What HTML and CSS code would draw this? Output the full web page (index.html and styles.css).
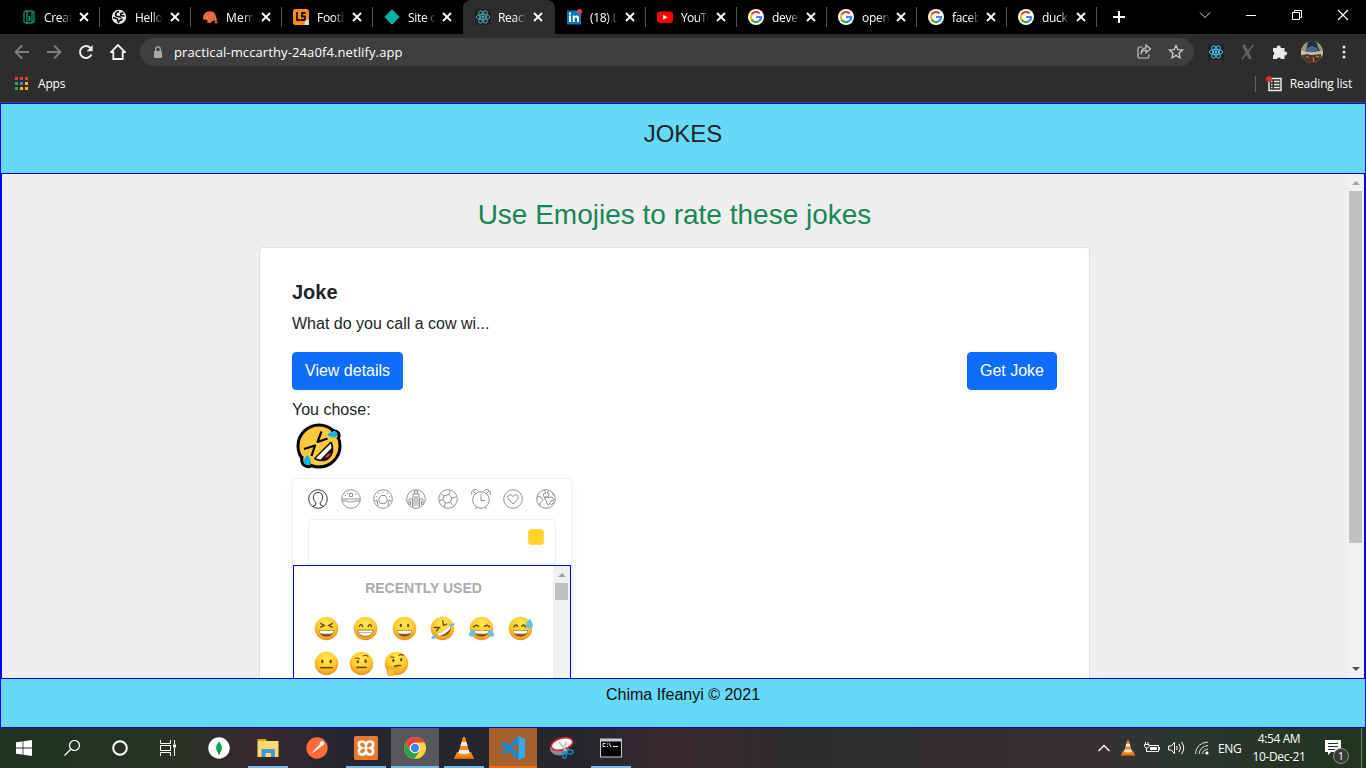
FILE: index.html
```html
<!DOCTYPE html>
<html lang="en">
<head>
<meta charset="utf-8">
<title>Jokes</title>
<link rel="stylesheet" href="styles.css">
</head>
<body>
<svg class="defs" width="0" height="0">
  <defs>
    <radialGradient id="face" cx=".5" cy=".3" r=".7"><stop offset="0" stop-color="#ffec55"/><stop offset=".6" stop-color="#fdc92d"/><stop offset="1" stop-color="#ee8d1c"/></radialGradient>
    <symbol id="close" viewBox="0 0 10 10"><path d="M1 1l8 8M9 1L1 9" stroke="#fff" stroke-width="1.8" fill="none"/></symbol>
    <symbol id="google" viewBox="0 0 16 16"><circle cx="8" cy="8" r="8" fill="#fff"/><g fill="none" stroke-width="2.2"><path d="M11.6 4.4A5.1 5.1 0 0 0 3.5 5.6" stroke="#ea4335"/><path d="M3.5 5.6a5.1 5.1 0 0 0 0 4.8" stroke="#fbbc05"/><path d="M3.5 10.4a5.1 5.1 0 0 0 7.8 1.5" stroke="#34a853"/><path d="M11.3 11.9A5.1 5.1 0 0 0 13.1 8H8" stroke="#4285f4"/></g></symbol>
    <symbol id="react" viewBox="0 0 16 16"><rect width="16" height="16" rx="1" fill="#202225"/><g fill="none" stroke="currentColor" stroke-width="1"><ellipse cx="8" cy="8" rx="6.8" ry="2.6"/><ellipse cx="8" cy="8" rx="6.8" ry="2.6" transform="rotate(60 8 8)"/><ellipse cx="8" cy="8" rx="6.8" ry="2.6" transform="rotate(120 8 8)"/></g><circle cx="8" cy="8" r="1.4" fill="currentColor"/></symbol>
    <symbol id="vlc" viewBox="0 0 20 22"><path d="M3 15h14l3 6.5H0z" fill="#f08a18"/><path d="M0 20h20v2H0z" fill="#d96a0a"/><path d="M9 0h2l5 17q-6 3-12 0z" fill="#f58a1c"/><path d="M7.6 5h4.8l1.2 4H6.4zM5.2 13h9.6l.9 3q-5.700 2.500-11.400 0z" fill="#e9e9e9"/></symbol>
    <symbol id="ball" viewBox="0 0 24 24"><circle cx="12" cy="12" r="11.300" fill="url(#face)"/></symbol>
    <symbol id="grin-mouth" viewBox="0 0 24 24"><path d="M4.800 13.500q7.200 1.200 14.400 0-.6 6.300-7.200 6.300t-7.200-6.300z" fill="#8a5518"/><path d="M5.300 14q6.700 1 13.400 0-.1 1.600-.8 2.500-5.900 1-11.800 0-.7-1-.8-2.500z" fill="#fff"/></symbol>
    <symbol id="e-squint" viewBox="0 0 24 24"><use href="#ball"/><use href="#grin-mouth"/><path d="M6 7l4 2-4 2M18 7l-4 2 4 2" fill="none" stroke="#70430f" stroke-width="1.300"/></symbol>
    <symbol id="e-beam" viewBox="0 0 24 24"><use href="#ball"/><path d="M4.500 13.500h15q-.6 6-7.500 6t-7.500-6z" fill="#fff" stroke="#9a6514" stroke-width=".8"/><path d="M5 16h14" stroke="#b78c50" stroke-width=".7"/><path d="M6 10.500q1.800-5 3.600 0M14.400 10.500q1.800-5 3.600 0" fill="none" stroke="#70430f" stroke-width="1.300"/></symbol>
    <symbol id="e-grin" viewBox="0 0 24 24"><use href="#ball"/><use href="#grin-mouth"/><ellipse cx="8.500" cy="9" rx="1.100" ry="1.600" fill="#70430f"/><ellipse cx="15.500" cy="9" rx="1.100" ry="1.600" fill="#70430f"/></symbol>
    <symbol id="e-joy" viewBox="0 0 24 24"><use href="#ball"/><use href="#grin-mouth"/><path d="M4 11q3-4 5.500-.5M14.500 10.500q2.500-3.500 5.500.5" fill="none" stroke="#70430f" stroke-width="1.300"/><path d="M5.500 13q1.500 6-3.500 7-3-1-1.500-4 1-2 5-3zM18.500 13q-1.500 6 3.500 7 3-1 1.500-4-1-2-5-3z" fill="#62c0ee"/></symbol>
    <symbol id="e-rofl" viewBox="0 0 24 24"><use href="#ball"/><path d="M7 17.500q7-2 12.500-8.500 1.500 5-2 8.500-5 4-10.500 0z" fill="#8a5518"/><path d="M7 17q7-2 12-8 1 2 .3 3.500-4 5-9.800 6.500-1.700-.6-2.500-2z" fill="#fff"/><path d="M3.500 11l5.500 0-3 3.500M12 4l1 5 3.500-1.500" fill="none" stroke="#70430f" stroke-width="1.300"/><path d="M7 17.500q-1 5-5 4.500-2.500-2.500 5-4.500zM18 9.500q2-3 6-2.500-.5 3-6 2.500z" fill="#62c0ee"/></symbol>
    <symbol id="e-sweat" viewBox="0 0 24 24"><use href="#ball"/><use href="#grin-mouth"/><path d="M5.500 11q2-4.500 4-.5M13 10.500q2-4 4 .5" fill="none" stroke="#70430f" stroke-width="1.300"/><path d="M20.500 2.500q-3.500 5-3.300 6.500.5 3 3.500 3 3.300-.5 3.300-3.500-.5-2-3.500-6z" fill="#62c0ee"/></symbol>
    <symbol id="e-neutral" viewBox="0 0 24 24"><use href="#ball"/><path d="M6 16h12" stroke="#70430f" stroke-width="1.500"/><ellipse cx="8" cy="10" rx="1.100" ry="1.800" fill="#70430f"/><ellipse cx="16" cy="10" rx="1.100" ry="1.800" fill="#70430f"/></symbol>
    <symbol id="e-brow" viewBox="0 0 24 24"><use href="#ball"/><path d="M7 15.800h10" stroke="#70430f" stroke-width="1.500"/><path d="M5.500 7q3-.8 5 .8M13.500 5q2.500-2 5 .3" fill="none" stroke="#70430f"/><ellipse cx="8.500" cy="10.200" rx="1.100" ry="1.600" fill="#70430f"/><ellipse cx="16" cy="9.800" rx="1.100" ry="1.800" fill="#70430f"/></symbol>
    <symbol id="e-think" viewBox="0 0 24 24"><use href="#ball"/><path d="M6 6q2.500-.8 4 .5M14 4.500q2.500-2 5 0" fill="none" stroke="#70430f"/><path d="M9.500 15q3-1.500 7-1" fill="none" stroke="#70430f" stroke-width="1.300"/><ellipse cx="9" cy="9" rx="1.100" ry="1.600" fill="#70430f"/><ellipse cx="16.500" cy="8.300" rx="1.100" ry="1.600" fill="#70430f"/><path d="M4 15q2-1 2.500 2l7-1.500q1.500.8 0 1.800L10.500 19q1 4-3 5-4.500.3-4.500-4z" fill="#fbc02f" stroke="#d98a14" stroke-width=".6"/></symbol>
  </defs>
</svg>

<div class="browser">
  <div class="tabstrip">
    <div class="tab"><svg class="fav" viewBox="0 0 16 16"><path d="M7 1.500L4 3v10l3 1.500zM9 2h3v12H9l-2-1V3.500L9 2zM12 3h2v10h-2" fill="none" stroke="#12915d" stroke-width="1.300"/><path d="M8.500 7h2v5h-2z" fill="#12915d"/></svg><span class="name">Creat</span><svg class="x"><use href="#close"/></svg></div>
    <div class="tab"><svg class="fav" viewBox="0 0 16 16"><circle cx="8" cy="8" r="7.200" fill="#e8eaed"/><path d="M8 2.500Q5 3 4.500 5.500 4.500 7.500 7 7.500t3 1.500M12.500 4Q9.500 4 9.500 5.500T13.500 7M2 8.500l3 1q2 0 1.500 2L8 14M8 12l3.500-2" fill="none" stroke="#000" stroke-width="1.500"/></svg><span class="name">Hello</span><svg class="x"><use href="#close"/></svg></div>
    <div class="tab"><svg class="fav" viewBox="0 0 16 16"><path d="M1 8.500Q1.500 3 7 2.200q6-.2 7 5.300 1 2 .8 4.500l-1.500 1-1-2q-2 2.500-5 2L4 10.500 1.500 11z" fill="#ea6a47"/><path d="M5 12.500l4 1M12.500 13.500h3M6 10l4 1" stroke="#ea6a47" stroke-width="1.400"/></svg><span class="name wide">Mem</span><svg class="x"><use href="#close"/></svg></div>
    <div class="tab"><svg class="fav" viewBox="0 0 16 16"><rect width="16" height="16" rx="2.500" fill="#ff8a0b"/><path d="M4 3v8h3.500M12.500 4H9v3.500h3V11H8" fill="none" stroke="#111" stroke-width="1.800"/><path d="M12 11.500l4-.8V16h-4.500z" fill="#ddd"/></svg><span class="name">Footb</span><svg class="x"><use href="#close"/></svg></div>
    <div class="tab narrow nosep"><svg class="fav" viewBox="0 0 16 16"><path d="M8 .3L15.700 8 8 15.700.3 8z" fill="#05b1a0"/></svg><span class="name">Site o</span><svg class="x"><use href="#close"/></svg></div>
    <div class="tab active"><svg class="fav dimreact"><use href="#react"/></svg><span class="name">React</span><svg class="x"><use href="#close"/></svg></div>
    <div class="tab"><svg class="fav" viewBox="0 0 16 16"><path d="M1 1.500h14v14H1z" fill="#0b78b8"/><path d="M3 6.500h2v6.500H3zM3 3.500h2v2H3zM6.700 6.500h2v1q2.500-2 4.300.5v5h-2V9q-1.200-1.400-2.300 0v4h-2z" fill="#fff"/><circle cx="13.500" cy="2.500" r="2.500" fill="#f0413e"/></svg><span class="name">(18) L</span><svg class="x"><use href="#close"/></svg></div>
    <div class="tab"><svg class="fav" viewBox="0 0 16 16"><rect y="2.500" width="16" height="11.500" rx="3" fill="#f00"/><path d="M6.200 5.800v4.900l4.200-2.450z" fill="#fff"/></svg><span class="name tight">YouTu</span><svg class="x"><use href="#close"/></svg></div>
    <div class="tab narrow"><svg class="fav"><use href="#google"/></svg><span class="name">devel</span><svg class="x"><use href="#close"/></svg></div>
    <div class="tab narrow"><svg class="fav"><use href="#google"/></svg><span class="name">open</span><svg class="x"><use href="#close"/></svg></div>
    <div class="tab narrow"><svg class="fav"><use href="#google"/></svg><span class="name">faceb</span><svg class="x"><use href="#close"/></svg></div>
    <div class="tab narrow"><svg class="fav"><use href="#google"/></svg><span class="name">duck</span><svg class="x"><use href="#close"/></svg></div>
    <svg class="plus" viewBox="0 0 12 12"><path d="M6 0v12M0 6h12" stroke="#fff" stroke-width="2"/></svg>
    <div class="window-buttons">
      <svg viewBox="0 0 12 12"><path d="M1 3.500l5 5 5-5" stroke="#ddd" fill="none"/></svg>
      <svg viewBox="0 0 12 12"><path d="M1 6.500h10" stroke="#fff"/></svg>
      <svg viewBox="0 0 12 12"><path d="M1.500 3.500h7v7h-7zM3.500 3.500v-2h7v7h-2" stroke="#fff" fill="none"/></svg>
      <svg viewBox="0 0 12 12"><path d="M1 1l10 10M11 1L1 11" stroke="#fff" stroke-width="1.200"/></svg>
    </div>
  </div>
  <div class="toolbar">
    <div class="nav">
      <svg viewBox="0 0 16 16"><path d="M15 8H2M8 1.500L1.500 8 8 14.500" stroke="#7d7f81" stroke-width="1.800" fill="none"/></svg>
      <svg viewBox="0 0 16 16"><path d="M1 8h13M8 1.500L14.500 8 8 14.500" stroke="#7d7f81" stroke-width="1.800" fill="none"/></svg>
      <svg viewBox="0 0 16 16"><path d="M13.500 10.500A6 6 0 1 1 12.500 4" stroke="#e8eaed" stroke-width="2" fill="none"/><path d="M14.700 1v6.300H8.500z" fill="#e8eaed"/></svg>
      <svg viewBox="0 0 16 16"><path d="M8 1L1 8.200h2.300V15h9.400V8.200H15z" stroke="#f1f3f4" stroke-width="1.800" fill="none"/></svg>
    </div>
    <div class="omnibox">
      <svg class="lock" viewBox="0 0 10 13"><rect x="1" y="5" width="8" height="7" rx="1" fill="#a6a9ad"/><path d="M2.700 5V3.200a2.300 2.300 0 0 1 4.600 0V5" stroke="#a6a9ad" stroke-width="1.300" fill="none"/></svg>
      <span class="url">practical-mccarthy-24a0f4.netlify.app</span>
      <svg class="share" viewBox="0 0 16 16"><path d="M6.500 3H3.500Q2 3 2 4.500v8Q2 14 3.500 14h8q1.500 0 1.500-1.500v-2M5 10.500q0-4 5-4.300V8.800l4.500-4L10 1v2.800Q5 4 5 10.500z" stroke="#c4c7c9" stroke-width="1.200" fill="none"/></svg>
      <svg class="star" viewBox="0 0 16 16"><path d="M8 1.500l1.900 4.200 4.600.4L11 9.200l1 4.600-4-2.400-4 2.400 1-4.600L1.500 6.100l4.600-.4z" stroke="#c4c7c9" stroke-width="1.400" fill="none"/></svg>
    </div>
    <div class="extensions">
      <svg class="ext blue"><use href="#react"/></svg>
      <svg class="ext" viewBox="0 0 16 16"><path d="M3.500 1l7 14" stroke="#626365" stroke-width="3" fill="none"/><path d="M13.500 1L2 15" stroke="#626365" stroke-width="1.800" fill="none"/></svg>
      <svg class="ext" viewBox="0 0 16 16"><path d="M1 4h3.800a2 2 0 1 1 3.800 0H12.500v3.500a2 2 0 1 1 0 3.800V15H8.900a2 2 0 0 0-3.800 0H1v-3.600a2 2 0 0 0 0-3.800z" fill="#e8eaed"/></svg>
      <svg class="avatar" viewBox="0 0 22 22"><defs><clipPath id="av"><circle cx="11" cy="11" r="11"/></clipPath></defs><g clip-path="url(#av)"><path d="M0 0h22v22H0z" fill="#a09972"/><path d="M7 0h8l2 6 2 4-6 1-8-1 1-5z" fill="#202e45"/><path d="M6 7l5-2 5 2 2 3-7 1.500-7-1.500z" fill="#49648f"/><path d="M0 9l5 2 5 .5L22 10v4H0z" fill="#c9c2ae"/><path d="M1 14l5-1 4 1 10-1v9H3z" fill="#4d3528"/><path d="M5 15l3 2M12 16l1 5M15 15l3 1" stroke="#c79a6b"/></g></svg>
      <svg class="dots" viewBox="0 0 4 14"><circle cx="2" cy="2" r="1.500" fill="#e8eaed"/><circle cx="2" cy="7" r="1.500" fill="#e8eaed"/><circle cx="2" cy="12" r="1.500" fill="#e8eaed"/></svg>
    </div>
  </div>
  <div class="bookmarks">
    <svg class="apps" viewBox="0 0 13 13"><path d="M0 0h3v3H0zM5 0h3v3H5zM10 0h3v3h-3z" fill="#ee3a37"/><path d="M0 5h3v3H0zM0 10h3v3H0z" fill="#35a456"/><path d="M5 5h3v3H5z" fill="#2b8bf2"/><path d="M10 5h3v3h-3zM5 10h3v3H5zM10 10h3v3h-3z" fill="#fbb51a"/></svg>
    <span>Apps</span>
    <i class="divider"></i>
    <svg class="reading" viewBox="0 0 17 16"><path d="M3 2.500h12v12H3z" fill="none" stroke="#e8eaed" stroke-width="1.500"/><path d="M5 5.500h1.500M8 5.500h5.500M5 8.500h1.500M8 8.500h5.500M5 11.500h1.500M8 11.500h5.500" stroke="#e8eaed" stroke-width="1.300"/><circle cx="3" cy="3" r="3" fill="#d93025"/></svg>
    <span>Reading list</span>
  </div>
</div>

<div class="app">
  <header class="app-header">JOKES</header>
  <main class="main">
    <div class="content">
      <h1 class="heading">Use Emojies to rate these jokes</h1>
      <section class="card">
        <h2 class="card-title">Joke</h2>
        <p class="joke">What do you call a cow wi...</p>
        <div class="actions"><button class="btn">View details</button><button class="btn">Get Joke</button></div>
        <p class="chose">You chose:</p>
        <svg class="chosen" viewBox="0 0 46 46"><circle cx="23" cy="23" r="21" fill="#ffc83d" stroke="#000" stroke-width="3"/><path d="M35 8q5-1 7.500 2 1.500 4-1 6.500M6 33q-1 7 2 9 4 3 7 1" stroke="#000" stroke-width="3" fill="#ffc83d"/><path d="M19.500 35.500L35 20q3 9-2 14t-13.500 1.500z" fill="#111" stroke="#111" stroke-width="2.600" stroke-linejoin="round"/><path d="M20 35L34.800 20.500l.7 4.500L24.500 36.500q-3-.3-4.500-1.500z" fill="#fff"/><path d="M29 35q1-4 6-5-1 4-6 5z" fill="#f03a17"/><path d="M25.500 8.500L21.500 19l10-3.500M8 26l11-3.500L15.500 33" fill="none" stroke="#000" stroke-width="2.200" stroke-linejoin="round"/><path d="M31 12q4-4 8-4 4 2 1.500 5.500-4 2-9.500-1.500zM11.500 32q-5 5-3.500 8.500 3.500 3 6.500 0 1.500-3.500-3-8.500z" fill="#00b9f2"/></svg>
        <div class="picker">
          <div class="categories">
            <svg class="on" viewBox="0 0 20 20"><circle cx="10" cy="10" r="9.300"/><path d="M4.500 17.500q4-1 3.500-3.500Q5.500 12 5.300 8q.5-4.500 4.700-4.500T14.700 8q-.2 4-2.700 6-.5 2.500 3.500 3.500"/></svg>
            <svg viewBox="0 0 20 20"><circle cx="10" cy="10" r="9.300"/><path d="M1 10h18M1 12h5l2 1h4l2-1h5M8.500 7.500v-3h3v3zM4 6.500h1M6 4.500h1M14 5h1.500"/></svg>
            <svg viewBox="0 0 20 20"><circle cx="10" cy="10" r="9.300"/><path d="M7 14q-1.500-1-1-5l2-2.500h4L14 9q.5 4-1 5-3 1.500-6 0zM2 12l2-1 1 6M18 12l-2-1-1 6M5 4l1 1M10 2.500v1M15 4l-1 1M3 7.500h1M16 7.500h1"/></svg>
            <svg viewBox="0 0 20 20"><circle cx="10" cy="10" r="9.300"/><path d="M7 18V5h6v13M8.500 5V2h3v3M3 16v-6h3.500v7M17 16v-6h-3.500v7M9 7v10M11 7v10M4.500 12v4M15.500 12v4"/></svg>
            <svg viewBox="0 0 20 20"><circle cx="10" cy="10" r="9.300"/><path d="M6 7l5-1.500 3 3.500-1.500 4.500-5 .5L5 10.500zM11 5.500l1-3.500M6 7L3.500 5M5 10.500L1 12M14 9l4-1M7.500 14L6 18M12.500 13.500l3 3"/></svg>
            <svg viewBox="0 0 20 20"><circle cx="10" cy="11" r="8.300"/><path d="M10 5.500v6h4M6 18l-2 2M14 18l2 2M1 6Q-.5 2 3 .8 6-.5 7 2M19 6q1.500-4-2-5.200-3-1.300-4 1.200M2 2l3 3M18 2l-3 3"/></svg>
            <svg viewBox="0 0 20 20"><circle cx="10" cy="10" r="9.300"/><path d="M10 15L5.200 10Q4 7.500 5.500 6.300 8 4.500 10 7.500q2-3 4.500-1.200Q16 7.500 14.800 10z"/></svg>
            <svg viewBox="0 0 20 20"><circle cx="10" cy="10" r="9.300"/><path d="M1 7l4 1 2 3-3 3v3M8 1l2 3-3 1 1 3h4l1-3-2-1 2-2M8 9l8-1 2 3-3 1-2 4-2-1-1-4zM16 4l2 3M15 16l3-3"/></svg>
          </div>
          <div class="search"><i class="tone"></i></div>
          <div class="emoji-scroll">
            <div class="emoji-list">
              <h3 class="group">Recently Used</h3>
              <div class="emoji-row"><svg><use href="#e-squint"/></svg><svg><use href="#e-beam"/></svg><svg><use href="#e-grin"/></svg><svg><use href="#e-rofl"/></svg><svg><use href="#e-joy"/></svg><svg><use href="#e-sweat"/></svg></div>
              <div class="emoji-row last"><svg><use href="#e-neutral"/></svg><svg><use href="#e-brow"/></svg><svg><use href="#e-think"/></svg></div>
            </div>
            <div class="scrollbar"><i class="arrow up"></i><i class="thumb small"></i></div>
          </div>
        </div>
      </section>
    </div>
    <div class="scrollbar"><i class="arrow up"></i><i class="thumb"></i><i class="arrow down"></i></div>
  </main>
  <footer class="app-footer">Chima Ifeanyi © 2021</footer>
</div>

<div class="taskbar">
  <div class="sys"><svg viewBox="0 0 16 16"><path d="M0 2.300L6.600 1.400v6.200H0zM7.400 1.300L16 0v7.600H7.400zM0 8.400h6.600v6.200L0 13.700zM7.400 8.400H16V16l-8.600-1.300z" fill="#fff"/></svg></div>
  <div class="sys"><svg viewBox="0 0 16 16"><circle cx="10.500" cy="5.500" r="5" stroke="#fff" stroke-width="1.200" fill="none"/><path d="M7 9L.5 15.500" stroke="#fff" stroke-width="1.200"/></svg></div>
  <div class="sys"><svg viewBox="0 0 16 16"><circle cx="8" cy="8" r="6.800" stroke="#fff" stroke-width="2" fill="none"/></svg></div>
  <div class="sys"><svg viewBox="0 0 16 16"><path d="M.5 0v3.500h10V0M.5 16v-3.500h10V16M.5 5.500h10v5H.5zM14.500 0v4M14.500 8v8" stroke="#fff" fill="none"/><path d="M13 4.500h3v3h-3z" fill="#fff"/></svg></div>
  <div class="task first"><svg viewBox="0 0 24 24"><circle cx="12" cy="12" r="10.700" fill="#fff"/><path d="M12 5.500q6 6.500 0 12.500-6-6 0-12.500z" fill="#13a455"/><path d="M12 14v5" stroke="#087c3b"/></svg></div>
  <div class="task open"><svg viewBox="0 0 24 24"><path d="M1.500 3H10l1 2.500H1.500z" fill="#e2a31b"/><path d="M1.500 5h21v16h-21z" fill="#ffd970"/><path d="M5.500 13h13.300v8H15v-4H9.500v4h-4z" fill="#3a97dc"/></svg></div>
  <div class="task"><svg viewBox="0 0 24 24"><circle cx="12" cy="12" r="10.700" fill="#ff6c37"/><path d="M6 17.500l8.500-9 2 2-7 5z" fill="#fff"/><circle cx="17" cy="7.500" r="2.300" fill="#fff"/></svg></div>
  <div class="task open"><svg viewBox="0 0 24 24"><rect x="0" y="0" width="24" height="24" rx="1.500" fill="#e8792a"/><path d="M8 5.500Q4.800 5.500 4.800 8.500q0 2.500 2.500 3.500-2.500 1-2.500 3.500 0 3 3.200 3 3 0 4-3 1 3 4 3 3.200 0 3.200-3 0-2.500-2.500-3.500 2.500-1 2.500-3.500 0-3-3.200-3-3 0-4 3-1-3-4-3zM10.500 12h3" fill="none" stroke="#fff" stroke-width="2.700"/></svg></div>
  <div class="task current"><svg viewBox="0 0 24 24"><circle cx="12" cy="12" r="11" fill="#ffd33e"/><path d="M2.500 6.500A11 11 0 0 1 21.600 6.500H12L7.500 14.700z" fill="#e64436"/><path d="M2.400 6.600L7.300 15H16.700L11.300 23A11 11 0 0 1 2.400 6.600z" fill="#2da14c"/><circle cx="12" cy="12" r="5.300" fill="#fff"/><circle cx="12" cy="12" r="4.200" fill="#4285f4"/></svg></div>
  <div class="task open"><svg viewBox="-2 -1 24 24"><use href="#vlc" width="20" height="22"/></svg></div>
  <div class="task alert"><svg viewBox="0 0 24 24"><path d="M17.500 6.500L3 18.500 0 16 17.500 0z" fill="#2586ca"/><path d="M17.500 17.500L3 5.500 0 8l17.500 16z" fill="#168bd2"/><path d="M17.500 0L24 3v18l-6.500 3z" fill="#31a9f2"/></svg></div>
  <div class="task"><svg viewBox="0 0 24 24"><ellipse cx="9.500" cy="13" rx="9.500" ry="6.500" fill="#8a8a8e"/><ellipse cx="12" cy="8" rx="11" ry="5.800" transform="rotate(-15 12 8)" fill="#f6f6f6" stroke="#d8212f" stroke-width="1.600"/><path d="M9 6l8 10M16 6l-2 10" stroke="#b8bcc5" stroke-width="1.500"/><ellipse cx="14.500" cy="19" rx="1.800" ry="3.200" fill="none" stroke="#1784c8" stroke-width="1.500"/><ellipse cx="20" cy="16" rx="3" ry="2" fill="none" stroke="#1784c8" stroke-width="1.500"/></svg></div>
  <div class="task open"><svg viewBox="0 0 24 24"><path d="M1 2.500h22v19H1z" fill="#c6c9cc"/><path d="M2 5.500h20v15H2z" fill="#050505"/><path d="M6.500 7.500H4v3h2.500M8.500 7.500v1M8.500 10v1M10 7l2 4M14 10.500h5" stroke="#e8e8e8" fill="none"/></svg></div>
  <div class="tray">
    <svg class="t-up" viewBox="0 0 12 8"><path d="M.5 7L6 1.500 11.500 7" stroke="#fff" stroke-width="1.300" fill="none"/></svg>
    <svg class="t-vlc"><use href="#vlc"/></svg>
    <svg class="t-bat" viewBox="0 0 16 12"><path d="M5 3.500h9.500v6H5.500M15.500 5v3M1.500 0v2M4 0v2M.5 2.500h4.500v2L3.500 6H2L.5 4.500zM2.500 6v3.500h3" stroke="#fff" fill="none"/><path d="M6 5h7v3H6z" fill="#fff"/></svg>
    <svg class="t-vol" viewBox="0 0 17 14"><path d="M.7 5h2.500L6.500 1.500v11L3.200 9H.7zM8.500 5q1.500 2 0 4M11 3q3 4 0 8M13.500 1q4.500 6 0 12" stroke="#fff" fill="none"/></svg>
    <svg class="t-wifi" viewBox="0 0 14 14"><path d="M.5 13Q1 2 13 1M4 13Q5 5.500 13 4.500M7 13q1-4.500 6-5M10 13q.5-2 3-2" stroke="#ddd" fill="none"/><circle cx="12" cy="12" r="1.500" fill="#fff"/></svg>
    <span class="lang">ENG</span>
    <div class="clock"><span>4:54 AM</span><span>10-Dec-21</span></div>
    <svg class="t-note" viewBox="0 0 26 26"><path d="M1 1h16v12H7l-3 3v-3H1z" fill="#fff"/><path d="M4 4.500h10M4 7.500h10M4 10.500h7" stroke="#253328"/><circle cx="17" cy="17" r="7.500" fill="#343c36" stroke="#8b918c"/><text x="17" y="21" text-anchor="middle" class="count">1</text></svg>
    <i class="desktop-edge"></i>
  </div>
</div>
</body>
</html>
```
FILE: styles.css
```css
* { box-sizing: border-box; }
body { margin: 0; width: 1366px; height: 768px; overflow: hidden; display: flex; flex-direction: column; font-family: "Liberation Sans", Arial, sans-serif; color: #212529; }
h1, h2, h3, p { margin: 0; }
svg { display: block; flex: none; }
.defs { position: absolute; }

.browser { height: 103px; flex: none; background: #2d2d2d; color: #fff; border-bottom: 1px solid #4b4b4b; font-family: "Open Sans", "Noto Sans", sans-serif; font-size: 12px; }
.tabstrip { height: 34px; background: #000; display: flex; align-items: center; padding-left: 9px; }
.tab { width: 91px; height: 34px; display: flex; align-items: center; padding-left: 11px; background: linear-gradient(#555, #555) right 7px / 1px 20px no-repeat; }
.tab.narrow { width: 90px; }
.tab.nosep { background: none; }
.tab.active { width: 92px; padding-left: 12px; background: #2d2d2d; border-radius: 8px 8px 0 0; }
.fav { width: 16px; height: 16px; }
.dimreact { color: #4d9fb4; }
.name { width: 28px; margin-left: 8px; white-space: nowrap; letter-spacing: -.3px; -webkit-mask-image: linear-gradient(90deg, #000 60%, transparent); mask-image: linear-gradient(90deg, #000 60%, transparent); }
.active .name { margin-left: 7px; }
.name.wide { letter-spacing: .2px; }
.name.tight { letter-spacing: -.6px; }
.x { width: 10px; height: 10px; margin-left: 7px; }
.narrow .x { margin-left: 6px; }
.plus { width: 12px; height: 12px; margin-left: 16px; }
.window-buttons { margin-left: auto; display: flex; gap: 34px; padding: 0 17px 5px 0; }
.window-buttons svg { width: 12px; height: 12px; }
.toolbar { height: 36px; display: flex; align-items: center; }
.nav { width: 140px; display: flex; gap: 16px; padding-left: 14px; }
.nav svg { width: 16px; height: 16px; }
.omnibox { width: 1054px; height: 28px; border-radius: 14px; background: #3f3f3f; display: flex; align-items: center; padding: 0 10px 0 13px; }
.lock { width: 10px; height: 13px; }
.url { margin-left: 11px; font-size: 13px; letter-spacing: .11px; }
.share { width: 16px; height: 16px; margin-left: auto; }
.star { width: 16px; height: 16px; margin-left: 16px; }
.extensions { display: flex; align-items: center; padding-left: 14px; gap: 16px; }
.ext { width: 16px; height: 16px; }
.blue { color: #52c1e4; }
.avatar { width: 22px; height: 22px; margin-left: -3px; }
.dots { width: 4px; height: 14px; margin-left: 3px; }
.bookmarks { height: 28px; display: flex; align-items: center; padding: 0 14px 1px 15px; letter-spacing: -.17px; }
.apps { width: 13px; height: 13px; margin-right: 10px; }
.divider { width: 1px; height: 16px; background: #5f5f5f; margin-left: auto; }
.reading { width: 17px; height: 16px; margin: 0 7px 0 10px; }

.app { height: 625px; flex: none; border: 1px solid #00f; background: #67d8f6; display: flex; flex-direction: column; }
.app-header { height: 69px; text-align: center; font-size: 24px; line-height: 29px; padding-top: 15px; }
.main { height: 506px; border: 1px solid #00f; background: #eee; display: flex; overflow: hidden; }
.content { flex: 1; height: 504px; overflow: hidden; display: flex; flex-direction: column; align-items: center; padding-top: 24px; }
.heading { font-size: 28px; line-height: 34px; font-weight: 400; color: #198754; margin-bottom: 15px; }
.card { width: 831px; flex: none; height: 700px; background: #fff; border: 1px solid #dfdfdf; border-radius: 4px; padding: 32px; }
.card-title { font-size: 20px; line-height: 24px; font-weight: 700; margin-bottom: 8px; }
.joke, .chose { font-size: 16px; line-height: 24px; }
.joke { margin-bottom: 16px; }
.actions { display: flex; justify-content: space-between; margin-bottom: 8px; }
.btn { height: 38px; padding: 6px 12px; border: 1px solid #0d6efd; border-radius: 4px; background: #0d6efd; color: #fff; font: 16px/24px "Liberation Sans", Arial, sans-serif; }
.chosen { width: 46px; height: 46px; margin: 1px 0 9px 4px; }
.picker { width: 280px; height: 320px; border: 1px solid #efefef; border-radius: 5px; box-shadow: 0 5px 10px #efefef; }
.categories { display: flex; justify-content: space-between; padding: 10px 14px 10px 14px; height: 40px; }
.categories svg { width: 22px; height: 20px; fill: none; stroke: #868686; stroke-width: .9; }
.categories .on { stroke: #222; }
.search { height: 46px; margin: 0 15px; border: 1px solid #efefef; border-radius: 3px; display: flex; justify-content: flex-end; padding: 9px 11px; }
.tone { width: 16px; height: 16px; border-radius: 3px; background: #ffd225; border: 1px solid #ffda50; }
.emoji-scroll { height: 230px; border: 1px solid #00f; display: flex; }
.emoji-list { flex: 1; padding: 0 19px; }
.group { font-size: 14px; line-height: 44px; text-align: center; text-transform: uppercase; color: #acacac; font-weight: 700; }
.emoji-row { display: flex; gap: 13.800px; padding: 6px 0 0 1px; }
.emoji-row svg { width: 25px; height: 25px; }
.emoji-row.last { gap: 10px; padding-top: 10px; }

.scrollbar { width: 17px; background: #f1f1f1; display: flex; flex-direction: column; align-items: center; }
.arrow { width: 0; height: 0; border: 4px solid transparent; flex: none; }
.arrow.up { border-top: 0; border-bottom-color: #a3a3a3; margin: 7px 0 6px; }
.arrow.down { border-bottom: 0; border-top-color: #505050; margin: auto 0 7px; }
.thumb { width: 13px; height: 352px; background: #c1c1c1; }
.thumb.small { height: 17px; }
.app-footer { height: 48px; text-align: center; font-size: 16px; line-height: 24px; padding-top: 4px; color: #111; }

.taskbar { height: 40px; flex: none; display: flex; color: #fff; font-family: "Open Sans", "Noto Sans", sans-serif; font-size: 12px; background: linear-gradient(90deg, #1f3320 0, #283223 160px, #37282e 260px, #26262e 340px, #26262d 580px, #38282e 670px, #2b2b2c 800px, #383034 1090px, #2d3530 1160px, #22351f 1366px); }
.sys { width: 48px; display: flex; align-items: center; justify-content: center; }
.sys svg { width: 16px; height: 16px; }
.task { width: 48px; margin-right: 1px; display: flex; align-items: center; justify-content: center; }
.task.first { margin-left: 3px; }
.task svg { width: 24px; height: 24px; }
.open { background: linear-gradient(#76b9ed, #76b9ed) center bottom / 40px 2px no-repeat; }
.current { background: #56565b; border-bottom: 2px solid #76b9ed; }
.alert { background: #a5602d; border-bottom: 2px solid #ff6a00; }
.current svg, .alert svg { margin-top: 2px; }
.tray { margin-left: auto; display: flex; align-items: center; }
.t-up { width: 12px; height: 8px; margin-right: 11px; }
.t-vlc { width: 14px; height: 16px; margin-right: 9px; }
.t-bat { width: 16px; height: 12px; margin-right: 8px; }
.t-vol { width: 17px; height: 14px; margin-right: 10px; }
.t-wifi { width: 14px; height: 14px; margin-right: 9px; }
.lang { width: 24px; letter-spacing: -.3px; }
.clock { width: 56px; margin-left: 9px; display: flex; flex-direction: column; align-items: center; line-height: 18px; letter-spacing: -.4px; white-space: nowrap; }
.t-note { width: 26px; height: 26px; margin: 8px 11px 0 17px; }
.count { fill: #fff; font-size: 11px; }
.desktop-edge { width: 1px; height: 40px; background: #7a827b; margin-right: 4px; }
```
